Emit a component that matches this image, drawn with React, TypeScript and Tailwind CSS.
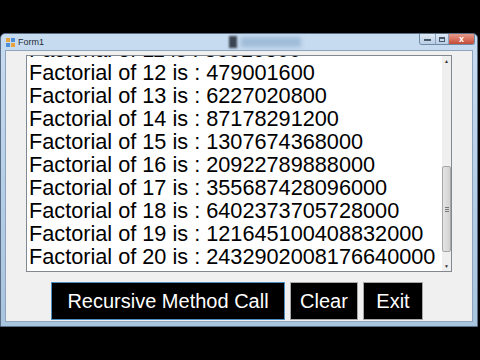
import React from 'react';

const rows: [number, string][] = [
  [11, '39916800'],
  [12, '479001600'],
  [13, '6227020800'],
  [14, '87178291200'],
  [15, '1307674368000'],
  [16, '20922789888000'],
  [17, '355687428096000'],
  [18, '6402373705728000'],
  [19, '121645100408832000'],
  [20, '2432902008176640000'],
];

function FormIcon() {
  return (
    <svg width="9" height="9" viewBox="0 0 9 9">
      <rect x="0" y="0" width="4" height="4" fill="#e8a33a" />
      <rect x="5" y="0" width="4" height="4" fill="#4f8fd8" />
      <rect x="0" y="5" width="4" height="4" fill="#4f8fd8" />
      <rect x="5" y="5" width="4" height="4" fill="#e8a33a" />
    </svg>
  );
}

function CaptionButtons() {
  return (
    <div className="flex h-[11px] self-start rounded-b-[3px] border border-t-0 border-[#6d8aa8] overflow-hidden">
      <div className="w-[16px] bg-gradient-to-b from-[#dfe9f5] to-[#b9cde4] flex items-end justify-center pb-[3px] border-r border-[#8aa2bd]">
        <div className="w-[7px] h-[2px] bg-[#4a5a6c]" />
      </div>
      <div className="w-[13px] bg-gradient-to-b from-[#dfe9f5] to-[#b9cde4] flex items-center justify-center border-r border-[#8aa2bd]">
        <div className="w-[6px] h-[5px] border border-[#4a5a6c] border-t-2" />
      </div>
      <div className="w-[25px] bg-gradient-to-b from-[#e69a8b] to-[#c54a35] flex items-center justify-center text-white text-[9px] font-bold leading-none font-['Liberation_Sans',sans-serif]">
        x
      </div>
    </div>
  );
}

export default function App() {
  return (
    <div className="w-[480px] h-[360px] bg-black pt-[33px] font-['Liberation_Sans',Arial,sans-serif]">
      <div className="w-[478px] h-[294px] flex flex-col rounded-t-[5px] border border-[#5a6f86] bg-gradient-to-b from-[#c8dcf0] via-[#b6cfe8] to-[#a9c4df]">
        {/* title bar */}
        <div className="h-[16px] flex items-start pl-[5px] pr-[2px]">
          <div className="flex items-center gap-[3px] pt-[4px]">
            <FormIcon />
            <span className="text-[9px] leading-none text-[#1e2a38]">Form1</span>
          </div>
          <div className="flex-1 flex items-start pl-[185px] pt-[2px]">
            <div className="w-[8px] h-[12px] bg-[#3b4552] blur-[1px]" />
            <div className="w-[60px] h-[10px] mt-[1px] ml-[4px] bg-[#9fbbd8] blur-[2px]" />
          </div>
          <CaptionButtons />
        </div>
        {/* client */}
        <div className="flex-1 mx-[4px] mb-[4px] bg-[#f0f0f0] border border-[#8ea4bc] flex flex-col pt-[4px]">
          <div className="ml-[20px] w-[426px] h-[217px] border border-[#828790] bg-white flex overflow-hidden">
            <div className="flex-1 overflow-hidden pl-[2px]">
              <div className="-mt-[18px]">
                {rows.map(([n, v]) => (
                  <div key={n} className="h-[23px] text-[21.7px] leading-[23px] text-black whitespace-nowrap">
                    Factorial of {n} is : {v}
                  </div>
                ))}
              </div>
            </div>
            <div className="w-[9px] bg-[#efefef] flex flex-col items-center">
              <div className="h-[10px] flex items-center justify-center text-[5px] leading-none text-[#333]">▲</div>
              <div className="flex-1 w-full relative">
                <div className="absolute left-0 right-0 top-[100px] h-[86px] border border-[#a6a6a6] rounded-[2px] bg-gradient-to-r from-[#e4e4e4] to-[#d2d2d2] flex flex-col items-center justify-center gap-[1px]">
                  <div className="w-[4px] h-[1px] bg-[#777]" />
                  <div className="w-[4px] h-[1px] bg-[#777]" />
                  <div className="w-[4px] h-[1px] bg-[#777]" />
                </div>
              </div>
              <div className="h-[10px] flex items-center justify-center text-[5px] leading-none text-[#333]">▼</div>
            </div>
          </div>
          <div className="flex gap-[5px] ml-[45px] mt-[10px]">
            <button className="w-[234px] h-[38px] bg-black border border-[#4c8fc2] text-white text-[20px] leading-none">
              Recursive Method Call
            </button>
            <button className="w-[68px] h-[38px] bg-black border border-[#a8a8a8] text-white text-[20px] leading-none">
              Clear
            </button>
            <button className="w-[60px] h-[38px] bg-black border border-[#a8a8a8] text-white text-[20px] leading-none">
              Exit
            </button>
          </div>
        </div>
      </div>
    </div>
  );
}
